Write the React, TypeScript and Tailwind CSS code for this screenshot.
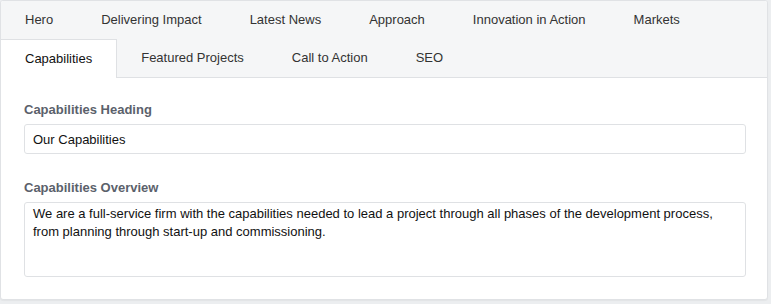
const rowOne = ["Hero", "Delivering Impact", "Latest News", "Approach", "Innovation in Action", "Markets"];
const rowTwo = ["Capabilities", "Featured Projects", "Call to Action", "SEO"];

function Tab({ label, active }: { label: string; active?: boolean }) {
  return (
    <button
      className={
        active
          ? "h-[39px] px-6 -mb-px bg-white border border-b-0 border-l-0 border-[#dfe1e4] text-[13px] text-[#111]"
          : "h-[38px] px-6 text-[13px] text-[#333]"
      }
    >
      {label}
    </button>
  );
}

export default function App() {
  return (
    <div
      className="w-[771px] h-[304px] bg-[#eceef0] overflow-hidden"
      style={{ fontFamily: '"Liberation Sans", Arial, Helvetica, sans-serif' }}
    >
      <div className="w-[768px] h-[300px] bg-white border border-[#e0e2e5] rounded-[3px] shadow-[0_1px_1px_rgba(0,0,0,0.04)] overflow-hidden">
        <div className="bg-[#f5f6f7] border-b border-[#dfe1e4]">
          <div className="flex">
            {rowOne.map((t) => (
              <Tab key={t} label={t} />
            ))}
          </div>
          <div className="flex">
            {rowTwo.map((t, i) => (
              <Tab key={t} label={t} active={i === 0} />
            ))}
          </div>
        </div>
        <div className="pl-[23px] pr-[21px] pt-[24px]">
          <label className="block text-[13px] leading-[15px] font-bold text-[#5b616b] mb-[7px]">Capabilities Heading</label>
          <input
            className="block w-full h-[30px] px-2 border border-[#dfe1e4] rounded-[3px] text-[13px] text-[#111] outline-none"
            defaultValue="Our Capabilities"
          />
          <label className="block text-[13px] leading-[15px] font-bold text-[#5b616b] mt-[26px] mb-[7px]">Capabilities Overview</label>
          <textarea
            className="block w-full h-[75px] px-2 py-[2px] border border-[#dfe1e4] rounded-[3px] text-[13px] leading-[18px] text-[#111] outline-none resize-none"
            defaultValue="We are a full-service firm with the capabilities needed to lead a project through all phases of the development process, from planning through start-up and commissioning."
          />
        </div>
      </div>
    </div>
  );
}
